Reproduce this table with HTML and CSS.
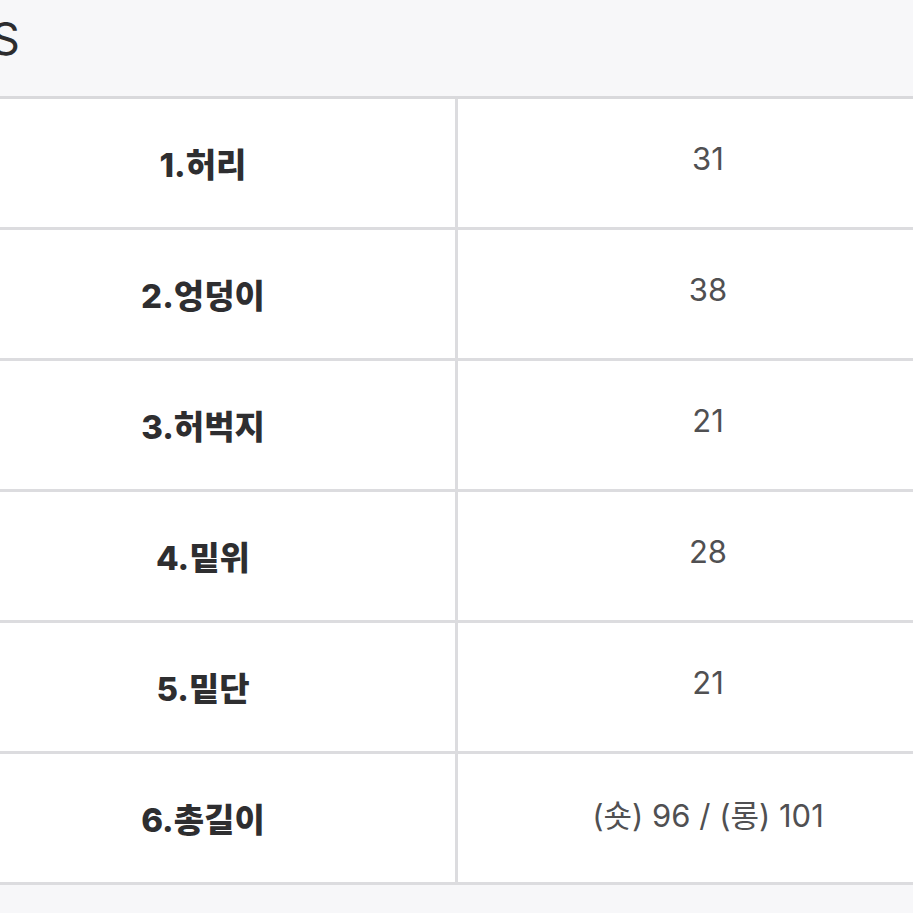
FILE: index.html
```html
<!DOCTYPE html>
<html lang="ko">
<head>
<meta charset="utf-8">
<link rel="stylesheet" href="styles.css">
</head>
<body>
<div class="sheet">
  <div class="head"><span class="size">S</span></div>
  <div class="table">
    <div class="row"><div class="label">1.허리</div><div class="value">31</div></div>
    <div class="row"><div class="label">2.엉덩이</div><div class="value">38</div></div>
    <div class="row"><div class="label">3.허벅지</div><div class="value">21</div></div>
    <div class="row"><div class="label">4.밑위</div><div class="value">28</div></div>
    <div class="row"><div class="label">5.밑단</div><div class="value">21</div></div>
    <div class="row"><div class="label">6.총길이</div><div class="value">(숏) 96 / (롱) 101</div></div>
  </div>
  <div class="foot"></div>
</div>
</body>
</html>
```
FILE: styles.css
```css
html, body {
  margin: 0;
  padding: 0;
  background: #ffffff;
  overflow: hidden;
}
body {
  width: 913px;
  height: 913px;
  font-family: "Inter", "Noto Sans CJK KR", sans-serif;
}
.sheet {
  margin: 0 -45px 0 -49px;
}
.head {
  height: 96px;
  background: #f7f7f9;
  border-bottom: 3px solid #d9d9dc;
  display: flex;
  align-items: center;
  padding-left: 40px;
  box-sizing: content-box;
}
.size {
  font-size: 45px;
  font-weight: 400;
  color: #2c2c2e;
  line-height: 1;
  margin-top: -20px;
}
.table {
  display: flex;
  flex-direction: column;
}
.row {
  display: grid;
  grid-template-columns: 507px 1fr;
  height: 128px;
  border-bottom: 3px solid #dcdcdf;
}
.label {
  display: flex;
  align-items: center;
  justify-content: center;
  border-right: 3px solid #dcdcdf;
  font-size: 33px;
  font-weight: 800;
  color: #2e2e30;
}
.value {
  display: flex;
  align-items: center;
  justify-content: center;
  font-size: 31px;
  font-weight: 400;
  color: #505052;
  padding-bottom: 10px;
}
.foot {
  height: 40px;
  background: #f7f7f9;
}
```
